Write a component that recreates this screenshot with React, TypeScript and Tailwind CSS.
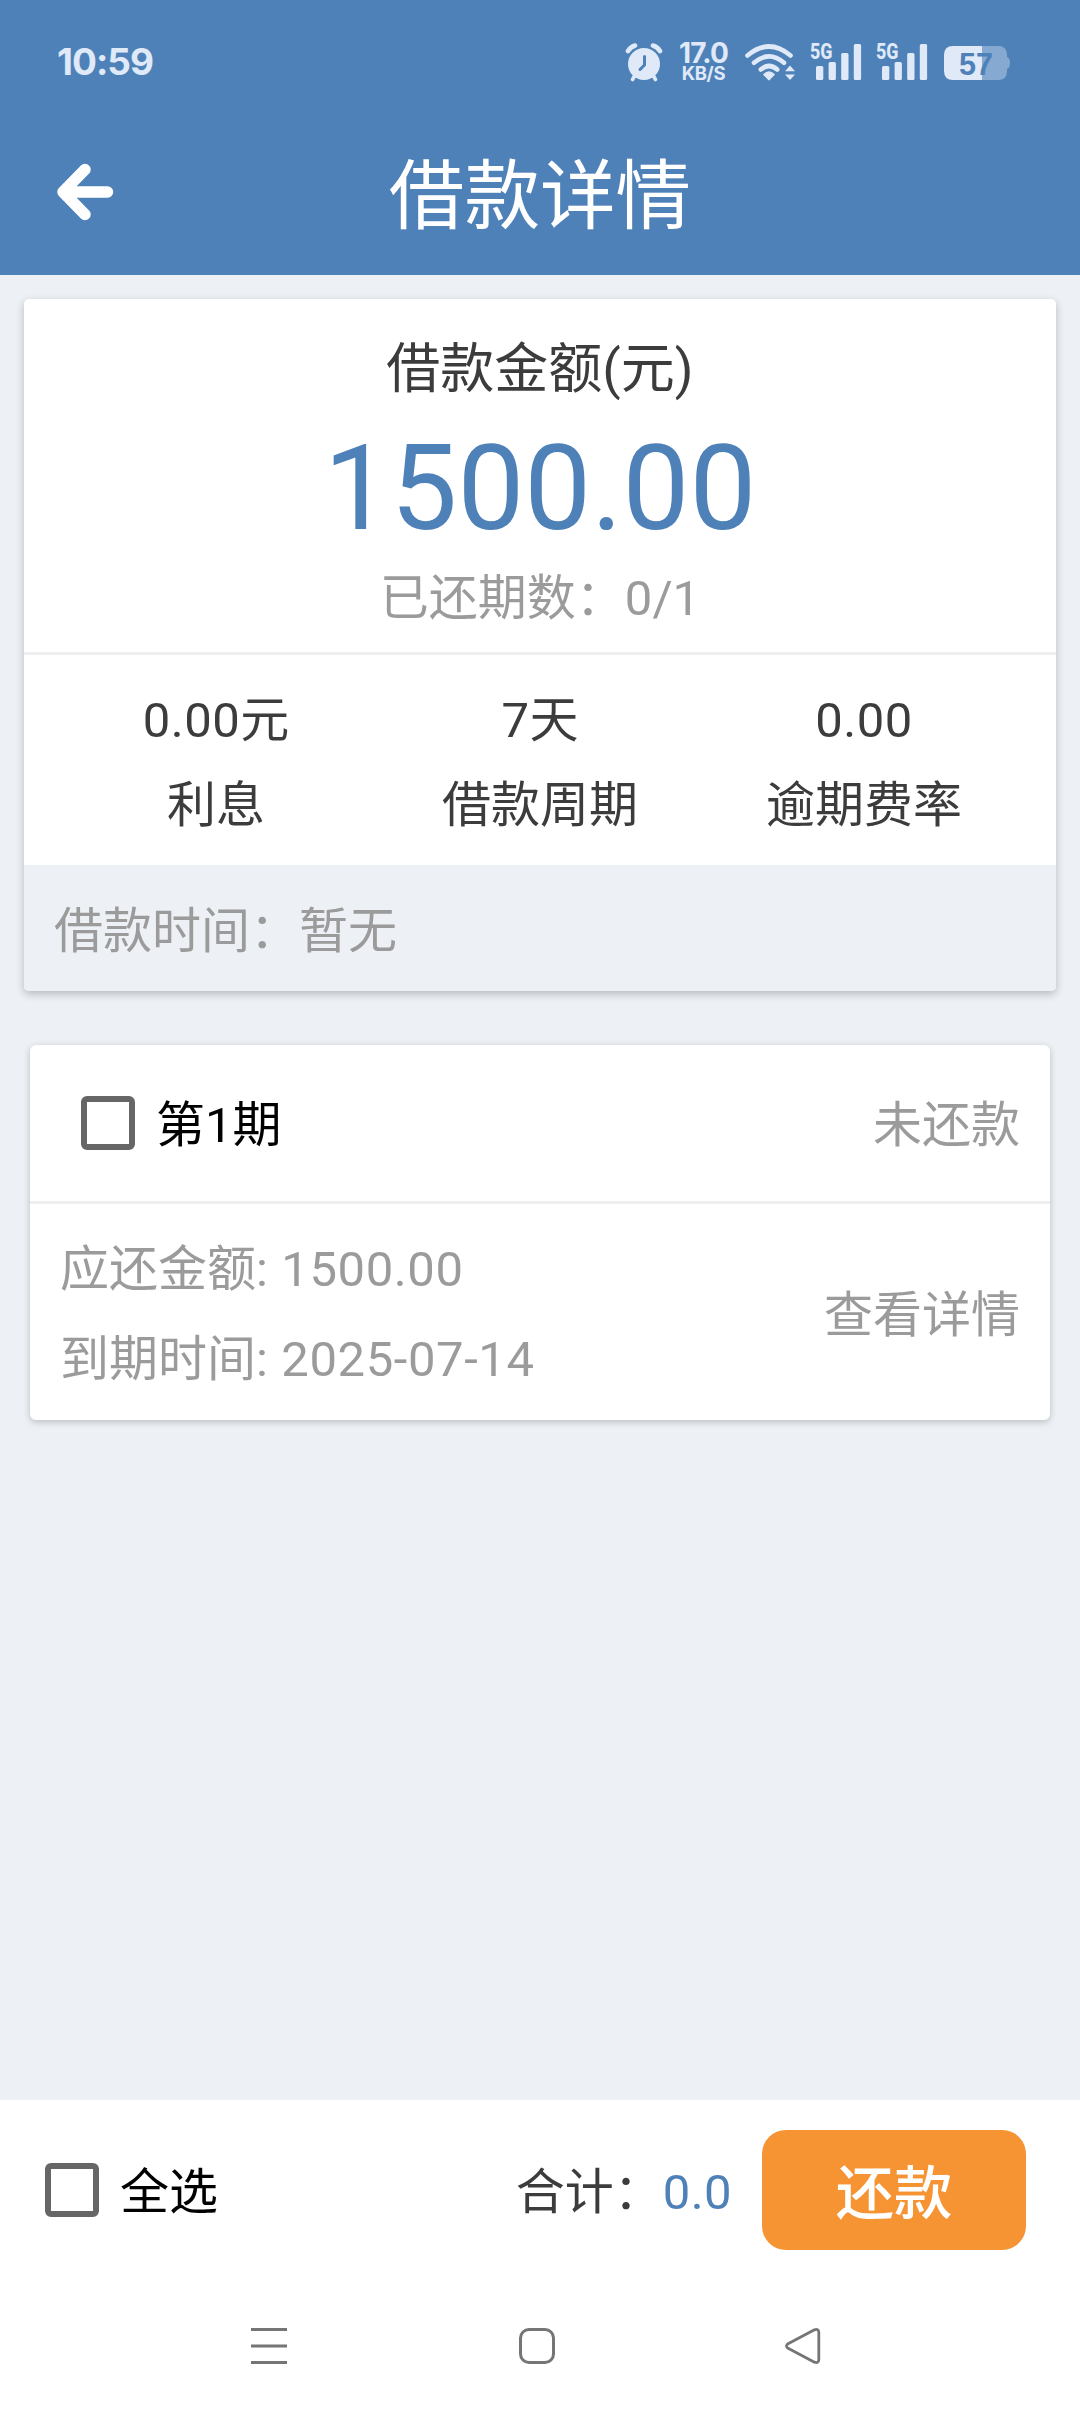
import React from "react";

const INK = "#dfe9f7";

function AlarmIcon() {
  return (
    <svg width="38" height="40" viewBox="0 0 38 40" fill="none">
      <path d="M3 8 Q5.500 4 10 2.500" stroke={INK} strokeWidth="4.600" strokeLinecap="round" />
      <path d="M35 8 Q32.500 4 28 2.500" stroke={INK} strokeWidth="4.600" strokeLinecap="round" />
      <path d="M9.500 33 L7.500 36.500 M28.500 33 L30.500 36.500" stroke={INK} strokeWidth="3.600" strokeLinecap="round" />
      <circle cx="19" cy="21" r="16" fill={INK} />
      <path d="M19.500 13.500 V22 L15 26.500" stroke="#4f81b9" strokeWidth="3" strokeLinecap="round" strokeLinejoin="round" />
    </svg>
  );
}

function WifiIcon() {
  return (
    <svg width="52" height="38" viewBox="0 0 52 38" fill="none">
      <g stroke={INK} strokeWidth="4.600" strokeLinecap="round">
        <path d="M3.500 12.500 Q25 -5.500 46.500 12.500" />
        <path d="M10 19.800 Q25 7 40 19.800" />
        <path d="M16.800 26.500 Q25 19.500 33.200 26.500" />
      </g>
      <path d="M25 36.800 L19.800 31.500 Q25 26.500 30.200 31.500 Z" fill={INK} stroke={INK} strokeWidth="1.200" strokeLinejoin="round" />
      <path d="M41 28.200 L46 22.500 L51 28.200 Z M41 31.600 L46 37 L51 31.600 Z" fill={INK} />
    </svg>
  );
}

function SignalIcon() {
  return (
    <svg className="-mt-[10px]" width="52" height="48" viewBox="0 -10 52 48" fill={INK}>
      <text x="0" y="16" fontFamily="Roboto, sans-serif" fontWeight="800" fontSize="22.500" textLength="22.500" lengthAdjust="spacingAndGlyphs">
        5G
      </text>
      <rect x="6" y="23" width="7.300" height="14" rx="1.500" />
      <rect x="18.600" y="19" width="7.300" height="18" rx="1.500" />
      <rect x="31.200" y="10" width="7.300" height="27" rx="1.500" />
      <rect x="43.800" y="1" width="7.300" height="36" rx="1.500" />
    </svg>
  );
}

function BatteryIcon() {
  return (
    <svg width="67" height="34" viewBox="0 0 67 34">
      <path d="M38 0 H54 Q63 0 63 9 V11 Q66 12 66 17 Q66 22 63 23 V25 Q63 34 54 34 H38 Z" fill="#86a9d1" />
      <path d="M38 0 H9 Q0 0 0 9 V25 Q0 34 9 34 H38 Z" fill={INK} />
      <text x="15" y="28.500" fontFamily="'Liberation Sans', sans-serif" fontWeight="700" fontSize="31" textLength="34" lengthAdjust="spacingAndGlyphs" fill="#4f81b9">
        57
      </text>
    </svg>
  );
}

function StatusBar() {
  return (
    <div className="flex h-[125px] items-start justify-between pl-[57px] pr-[69px] pt-[43px] text-[#dfe9f7]">
      <div className="font-[Inter] text-[37px] font-bold leading-[38px] tracking-[-1px]">10:59</div>
      <div className="flex items-start">
        <AlarmIcon />
        <div className="ml-[15px] flex w-[51px] flex-col items-center font-[Inter] font-bold">
          <div className="h-[22px] text-[28px] leading-[21px] tracking-[-0.8px]">17.0</div>
          <div className="text-[18.5px] leading-[17px] tracking-[-0.3px]">KB/S</div>
        </div>
        <div className="ml-[15px]"><WifiIcon /></div>
        <div className="ml-[14px]"><SignalIcon /></div>
        <div className="ml-[14px]"><SignalIcon /></div>
        <div className="ml-[16px] pt-[3px]"><BatteryIcon /></div>
      </div>
    </div>
  );
}

function TitleBar() {
  return (
    <div className="grid h-[150px] grid-cols-[1fr_auto_1fr] items-center">
      <div className="pl-[57px] pb-[16px]">
        <svg width="57" height="58" viewBox="0 0 57 58" fill="none" stroke="#fff" strokeWidth="11.500" strokeLinecap="round" strokeLinejoin="round">
          <path d="M28 6.500 L6 29 L28 51.500 M8 29 H50.500" />
        </svg>
      </div>
      <h1 className="pb-[6px] text-[75.6px] leading-[100px] text-white">借款详情</h1>
      <div />
    </div>
  );
}

function Stat({ value, unit, label }: { value: string; unit?: string; label: string }) {
  return (
    <div className="flex flex-col items-center">
      <div className="leading-[84px]">
        <span className="tracking-[0.5px]">{value}</span>
        {unit}
      </div>
      <div className="leading-[85px]">{label}</div>
    </div>
  );
}

function Box() {
  return <div className="size-[54px] shrink-0 rounded-[6px] border-[6px] border-[#666]" />;
}

function SummaryCard() {
  return (
    <section className="mx-[24px] flex h-[692px] flex-col overflow-hidden rounded-[5px] bg-white text-[#3c3c3c] shadow-[0_3px_9px_rgba(0,0,0,0.24)]">
      <div className="flex h-[356px] flex-col items-center border-b-[3px] border-[#eeeff0] pt-[31px]">
        <div className="text-[54px] leading-[80px]">借款金额(元)</div>
        <div className="text-[119px] leading-[158px] text-[#4f81b9]">1500.00</div>
        <div className="leading-[62px] text-[#9b9b9b]">已还期数：0/1</div>
      </div>
      <div className="grid h-[210px] grid-cols-3 px-[30px] pt-[24px]">
        <Stat value="0.00" unit="元" label="利息" />
        <Stat value="7" unit="天" label="借款周期" />
        <Stat value="0.00" label="逾期费率" />
      </div>
      <div className="h-[126px] bg-[#edf1f5] px-[30px] pt-[7px] leading-[120px] text-[#9b9b9b]">借款时间：暂无</div>
    </section>
  );
}

function InstallmentCard() {
  return (
    <section className="mx-[30px] mt-[54px] h-[375px] rounded-[6px] bg-white text-[#9b9b9b] shadow-[0_2px_7px_rgba(0,0,0,0.22)]">
      <div className="flex h-[159px] items-center justify-between border-b-[3px] border-[#efeff0] pl-[51px] pr-[30px]">
        <div className="flex items-center">
          <Box />
          <div className="ml-[21px] pt-[6px] leading-[60px] text-black">第1期</div>
        </div>
        <div className="pt-[6px] leading-[60px]">未还款</div>
      </div>
      <div className="flex h-[216px] items-center justify-between px-[30px]">
        <div className="pt-[5px] leading-[90px]">
          <div>应还金额<span className="tracking-[0.6px]">: 1500.00</span></div>
          <div>到期时间<span className="tracking-[0.6px]">: 2025-07-14</span></div>
        </div>
        <div className="pt-[7px] leading-[60px]">查看详情</div>
      </div>
    </section>
  );
}

function ActionBar() {
  return (
    <div className="flex h-[180px] items-center bg-white pl-[45px] pr-[54px]">
      <Box />
      <div className="ml-[21px] pt-[5px] leading-[60px] text-black">全选</div>
      <div className="ml-auto pt-[5px] leading-[60px] text-[#3c3c3c]">
        合计：<span className="tracking-[0.4px] text-[#4f81b9]">0.0</span>
      </div>
      <button className="ml-[30px] h-[120px] w-[264px] rounded-[24px] bg-[#f69434] pt-[9px] text-[58.3px] font-medium leading-[111px] text-white">
        还款
      </button>
    </div>
  );
}

function NavBar() {
  return (
    <div className="flex h-[132px] items-start bg-white pl-[251px] pt-[47px]">
      <svg width="36" height="38" fill="none" stroke="#757575" strokeWidth="3">
        <path d="M0 2.500 H36 M0 19 H36 M0 35.500 H36" />
      </svg>
      <svg className="ml-[231px]" width="38" height="38" fill="none" stroke="#757575" strokeWidth="3">
        <rect x="2.500" y="2.500" width="33" height="33" rx="8.500" />
      </svg>
      <svg className="ml-[228px]" width="38" height="38" fill="none" stroke="#757575" strokeWidth="2.800" strokeLinejoin="round">
        <path d="M3.600 17 L30.500 2.800 Q34.500 1.500 34.800 5 V33 Q34.500 36.500 30.500 35.200 L3.600 21 Q1.500 19 3.600 17 Z" />
      </svg>
    </div>
  );
}

export default function App() {
  return (
    <div className="flex h-[2412px] w-[1080px] flex-col bg-[#edf1f6] font-[Roboto,'Noto_Sans_CJK_SC',sans-serif] text-[49px]" lang="zh-CN">
      <header className="bg-[#4f81b9]">
        <StatusBar />
        <TitleBar />
      </header>
      <main className="flex-1 pt-[24px]">
        <SummaryCard />
        <InstallmentCard />
      </main>
      <footer>
        <ActionBar />
        <NavBar />
      </footer>
    </div>
  );
}
